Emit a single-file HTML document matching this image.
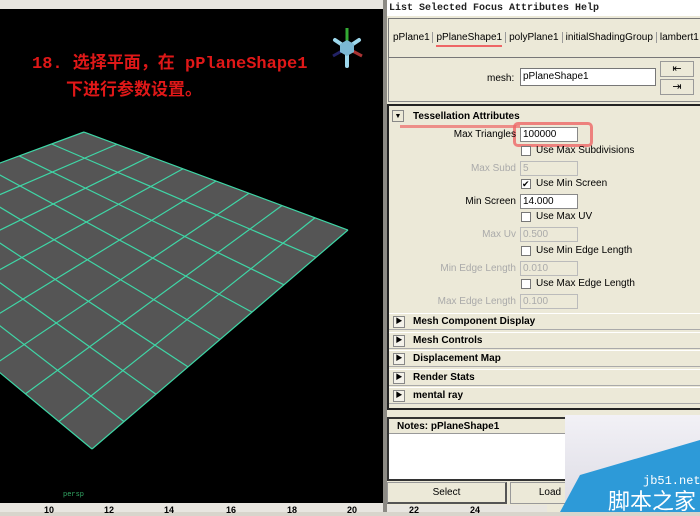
<!DOCTYPE html>
<html><head><meta charset="utf-8"><style>
*{margin:0;padding:0;box-sizing:border-box}
body{width:700px;height:512px;overflow:hidden;background:#d8d5cc;font-family:"Liberation Sans","Noto Sans CJK SC",sans-serif;font-size:10px;color:#000;position:relative}
.a{position:absolute}
.lbl{position:absolute;text-align:right;width:130px;left:386px;font-size:10px}
.fld{position:absolute;left:520px;width:58px;height:15px;background:#fff;border:1px solid #888;font-size:10px;padding-left:2px;line-height:13px}
.dis{background:#ece9d8;color:#aaa;border-color:#bbb}
.cb{position:absolute;left:521px;width:10px;height:10px;background:#fff;border:1px solid #777}
.cbl{position:absolute;left:536px;font-size:10px}
.hd{position:absolute;left:389px;width:311px;height:17px;border-top:1px solid #fff;border-bottom:1px solid #aaa;background:#ece9d8;font-weight:bold;font-size:10px;line-height:16px;padding-left:24px}
.hd i{position:absolute;left:4px;top:2px;width:12px;height:12px;border:1px solid #888;background:#f4f2ea;font-style:normal;font-size:7px;line-height:10px;text-align:center}
.n{position:absolute;top:505px;font-size:9px;font-weight:bold}
</style></head><body>
<div class="a" style="left:0;top:0;width:385px;height:9px;background:#e8e6e0"></div>
<div class="a" style="left:0;top:9px;width:383px;height:494px;background:#000"></div>
<div class="a" style="left:383px;top:0;width:4px;height:512px;background:#8c8a84"></div>
<svg class="a" style="left:0;top:9px" width="383" height="494" viewBox="0 9 383 494">
<polygon points="84,132 348,230 92,449 -175,227.7" fill="#555"/>
<g stroke="#3fd6a6" stroke-width="1.2">
<line x1="84" y1="132" x2="348" y2="230"/><line x1="51.6" y1="144" x2="316" y2="257.4"/><line x1="19.2" y1="155.9" x2="284" y2="284.8"/><line x1="-13.1" y1="167.9" x2="252" y2="312.1"/><line x1="-45.5" y1="179.9" x2="220" y2="339.5"/><line x1="-77.9" y1="191.8" x2="188" y2="366.9"/><line x1="-110.3" y1="203.8" x2="156" y2="394.3"/><line x1="-142.6" y1="215.7" x2="124" y2="421.6"/><line x1="-175" y1="227.7" x2="92" y2="449"/>
<line x1="84" y1="132" x2="-175" y2="227.7"/><line x1="117" y1="144.25" x2="-141.6" y2="255.4"/><line x1="150" y1="156.5" x2="-108.2" y2="283.1"/><line x1="183" y1="168.75" x2="-74.8" y2="310.8"/><line x1="216" y1="181" x2="-41.4" y2="338.5"/><line x1="249" y1="193.25" x2="-8" y2="366.2"/><line x1="282" y1="205.5" x2="25.4" y2="393.9"/><line x1="315" y1="217.75" x2="58.8" y2="421.6"/><line x1="348" y1="230" x2="92" y2="449"/>
</g>
<g stroke="#9dd8ec" stroke-width="4" stroke-linecap="round"><line x1="347" y1="48" x2="335" y2="40"/><line x1="347" y1="48" x2="359" y2="40"/><line x1="347" y1="48" x2="347" y2="66"/></g>
<line x1="347" y1="48" x2="347" y2="28" stroke="#3a3" stroke-width="3"/>
<line x1="347" y1="48" x2="333" y2="56" stroke="#226" stroke-width="3"/>
<line x1="347" y1="48" x2="362" y2="56" stroke="#a33" stroke-width="3"/>
<polygon points="347,40 354,44 354,52 347,56 340,52 340,44" fill="#7bb8d4"/>
<text x="32" y="68" fill="#e01818" font-size="17" font-family="Liberation Mono,'Noto Sans CJK SC',monospace" font-weight="bold">18. 选择平面，在 pPlaneShape1</text>
<text x="66" y="95" fill="#e01818" font-size="17" font-family="'Noto Sans CJK SC',sans-serif" font-weight="bold">下进行参数设置。</text>
<text x="63" y="496" fill="#3a6" font-size="7" font-family="Liberation Mono,monospace">persp</text>
</svg>
<div class="a" style="left:0;top:503px;width:383px;height:9px;background:#e8e6e0"></div>
<div class="a" style="left:387px;top:0;width:313px;height:512px;background:#ece9d8"></div>
<div class="a" style="left:387px;top:0;width:313px;height:16px;background:#fff;font-family:'Liberation Mono',monospace;font-size:10px;font-weight:bold;padding:3px 2px;color:#222">List Selected Focus Attributes Help</div>
<div class="a" style="left:388px;top:18px;width:312px;height:40px;border:1px solid #777;border-right:none"></div>
<div class="a" style="left:393px;top:32px;font-size:10px;white-space:pre">pPlane1 <span style="border-left:1px solid #999;padding:0 3px">pPlaneShape1</span><span style="border-left:1px solid #999;padding:0 3px">polyPlane1</span><span style="border-left:1px solid #999;padding:0 3px">initialShadingGroup</span><span style="border-left:1px solid #999;padding:0 3px">lambert1</span></div>
<div class="a" style="left:436px;top:45px;width:66px;height:2px;background:#e66"></div>
<div class="a" style="left:388px;top:58px;width:312px;height:44px;border:1px solid #888;border-top:none;border-right:none"></div>
<div class="a" style="left:487px;top:73px">mesh:</div>
<div class="a" style="left:520px;top:68px;width:136px;height:18px;background:#fff;border:1px solid #777;padding:2px">pPlaneShape1</div>
<div class="a" style="left:660px;top:61px;width:34px;height:16px;border:1px solid #999;text-align:center;font-size:11px">⇤</div>
<div class="a" style="left:660px;top:79px;width:34px;height:16px;border:1px solid #999;text-align:center;font-size:11px">⇥</div>
<div class="a" style="left:387px;top:104px;width:313px;height:306px;border:2px solid #222;border-right:none;background:#ece9d8"></div>
<div class="a" style="left:392px;top:110px;width:12px;height:12px;border:1px solid #888;font-size:7px;text-align:center;line-height:11px">▼</div>
<div class="a" style="left:413px;top:111px;font-weight:bold">Tessellation Attributes</div>
<div class="a" style="left:400px;top:125px;width:120px;height:3px;background:#e66;opacity:.7"></div>
<div class="a" style="left:513px;top:122px;width:80px;height:25px;border:3px solid #e66;border-radius:5px;opacity:.8"></div>
<div class="lbl" style="top:129px">Max Triangles</div><div class="fld" style="top:127px">100000</div>
<div class="cb" style="top:146px"></div><div class="cbl" style="top:145px">Use Max Subdivisions</div>
<div class="lbl" style="top:163px;color:#aaa">Max Subd</div><div class="fld dis" style="top:161px">5</div>
<div class="cb" style="top:179px;font-size:9px;line-height:8px">✔</div><div class="cbl" style="top:178px">Use Min Screen</div>
<div class="lbl" style="top:196px">Min Screen</div><div class="fld" style="top:194px">14.000</div>
<div class="cb" style="top:212px"></div><div class="cbl" style="top:211px">Use Max UV</div>
<div class="lbl" style="top:229px;color:#aaa">Max Uv</div><div class="fld dis" style="top:227px">0.500</div>
<div class="cb" style="top:246px"></div><div class="cbl" style="top:245px">Use Min Edge Length</div>
<div class="lbl" style="top:263px;color:#aaa">Min Edge Length</div><div class="fld dis" style="top:261px">0.010</div>
<div class="cb" style="top:279px"></div><div class="cbl" style="top:278px">Use Max Edge Length</div>
<div class="lbl" style="top:296px;color:#aaa">Max Edge Length</div><div class="fld dis" style="top:294px">0.100</div>
<div class="hd" style="top:313px"><i>▶</i>Mesh Component Display</div>
<div class="hd" style="top:332px"><i>▶</i>Mesh Controls</div>
<div class="hd" style="top:350px"><i>▶</i>Displacement Map</div>
<div class="hd" style="top:369px"><i>▶</i>Render Stats</div>
<div class="hd" style="top:387px"><i>▶</i>mental ray</div>
<div class="a" style="left:387px;top:417px;width:313px;height:64px;border:2px solid #333;border-right:none;background:#fff"></div>
<div class="a" style="left:389px;top:419px;width:311px;height:15px;background:#ece9d8;font-weight:bold;padding:2px 8px;border-bottom:1px solid #999">Notes: pPlaneShape1</div>
<div class="a" style="left:387px;top:482px;width:120px;height:22px;border:1px solid #999;border-right:2px solid #555;border-bottom:2px solid #555;text-align:center;line-height:20px">Select</div>
<div class="a" style="left:510px;top:482px;width:80px;height:22px;border:1px solid #999;text-align:center;line-height:20px">Load</div>
<div class="a" style="left:387px;top:505px;width:160px;height:7px;background:#e8e6e0"></div>
<span class="n" style="left:44px">10</span><span class="n" style="left:104px">12</span><span class="n" style="left:164px">14</span><span class="n" style="left:226px">16</span><span class="n" style="left:287px">18</span><span class="n" style="left:347px">20</span><span class="n" style="left:409px">22</span><span class="n" style="left:470px">24</span>
<div class="a" style="left:565px;top:415px;width:135px;height:97px;background:linear-gradient(180deg,#f2f1f6,#dcdbe4)"></div>
<svg class="a" style="left:560px;top:440px" width="140" height="72"><polygon points="140,0 140,72 0,72 20,35" fill="#2d9ad8"/></svg>
<div class="a" style="left:643px;top:474px;color:#fff;font-size:12px;font-family:'Liberation Mono',monospace">jb51.net</div>
<div class="a" style="left:608px;top:488px;color:#fff;font-size:22px;line-height:24px;font-family:'Noto Sans CJK SC',sans-serif">脚本之家</div>
</body></html>
